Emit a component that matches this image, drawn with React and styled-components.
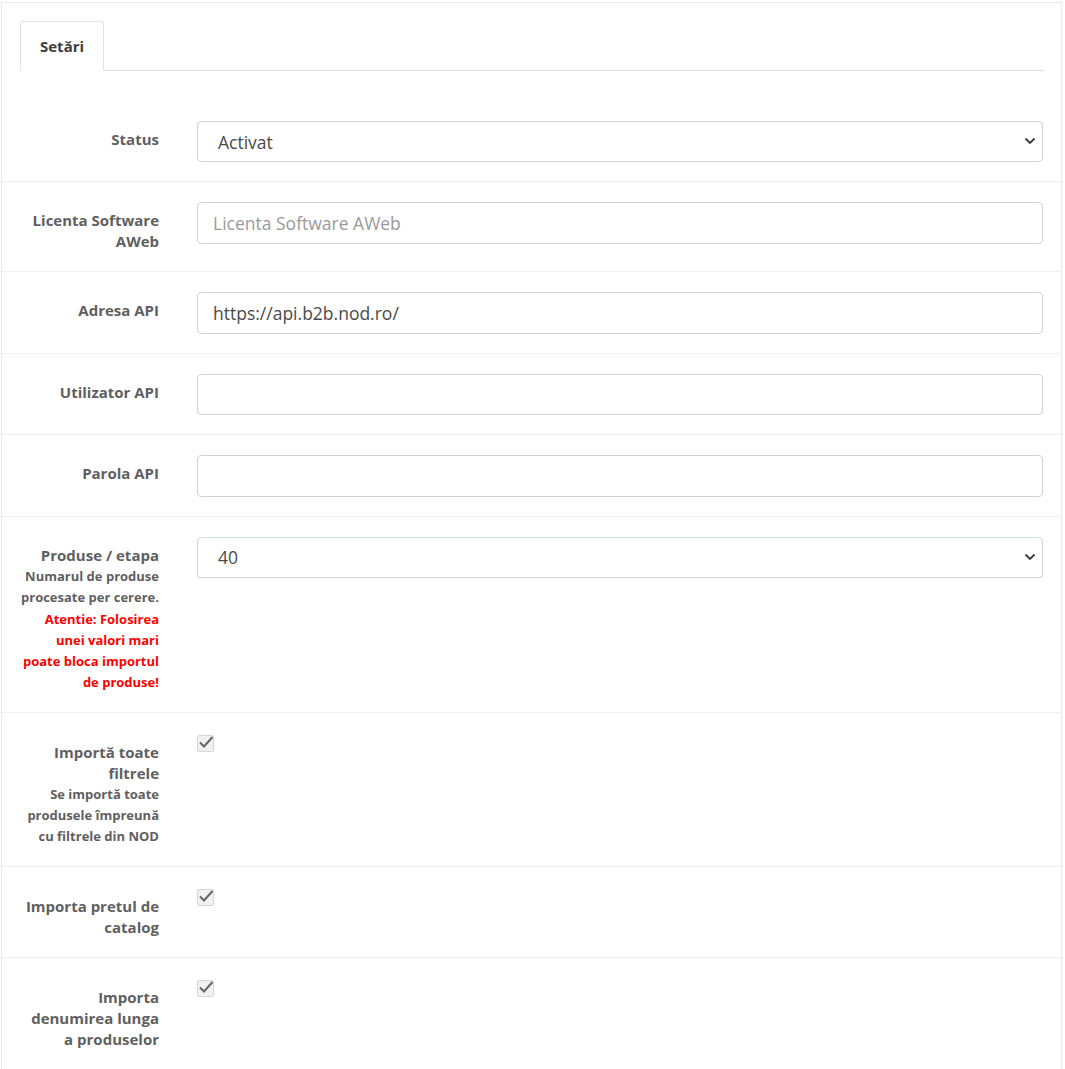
import styled, { createGlobalStyle } from 'styled-components';

const GlobalStyle = createGlobalStyle`
    html, body {
        margin: 0;
        background: #fff;
        font-family: "Open Sans", "Liberation Sans", sans-serif;
    }
`;

const Panel = styled.div`
    margin: 2px 3px 0 1px;
    border: 1px solid #e8e8e8;
    background: #fff;
`;

const TabBar = styled.div`
    display: flex;
    margin: 18px 17px 0 18px;
    border-bottom: 1px solid #dedede;
`;

const Tab = styled.div`
    padding: 14px 19px 13px 19px;
    margin-bottom: -1px;
    border: 1px solid #e2e2e2;
    border-bottom-color: #fff;
    border-radius: 3px 3px 0 0;
    background: #fff;
    font-size: 15px;
    line-height: 21px;
    font-weight: 700;
    color: #3d3d3d;
`;

const Form = styled.form`
    margin-top: 30px;
`;

const Row = styled.div`
    display: grid;
    grid-template-columns: 139px 1fr;
    column-gap: 38px;
    padding: 20px 18px 19px 18px;
    & + & {
        border-top: 1px solid #efefef;
    }
`;

const Label = styled.label`
    padding-top: ${(p) => (p.$check ? 9 : 8)}px;
    text-align: right;
    font-size: 15px;
    line-height: 21px;
    font-weight: 700;
    color: #5f5f5f;
`;

const Help = styled.span`
    display: block;
    margin-top: 0.5px;
    font-size: 13px;
    line-height: 21px;
    font-weight: 700;
    color: ${(p) => (p.$warn ? '#ff0000' : '#5f5f5f')};
`;

const Field = styled.div`
    position: relative;
    align-self: start;
`;

const controlBase = `
    box-sizing: border-box;
    width: 100%;
    border: 1px solid #d2d2d2;
    border-radius: 4px;
    background: #fff;
    font-family: "Open Sans", "Liberation Sans", sans-serif;
    font-size: 17.5px;
    color: #4a4a4a;
    outline: none;
`;

const Input = styled.input`
    ${controlBase}
    height: 41.6px;
    padding: 0 15px;
    &::placeholder {
        color: #9a9a9a;
    }
`;

const Select = styled.select`
    ${controlBase}
    height: 41px;
    appearance: none;
    padding: 0 36px 0 20px;
    ${(p) => p.$focus && 'border-top-color: #cfe3f1;'}
`;

const Chevron = styled.svg`
    position: absolute;
    right: 7px;
    top: 16px;
    pointer-events: none;
`;

const CheckBox = styled.svg`
    display: block;
    margin-top: 1px;
`;

const SelectField = ({ value, focus }) => (
    <Field>
        <Select defaultValue={value} $focus={focus}>
            <option>{value}</option>
        </Select>
        <Chevron width="12" height="8" viewBox="0 0 12 8">
            <path d="M1.5 1.5 L6 6 L10.5 1.5" fill="none" stroke="#3a3a3a" strokeWidth="1.8" />
        </Chevron>
    </Field>
);

const Checked = () => (
    <Field>
        <CheckBox width="19" height="19" viewBox="0 0 19 19">
            <rect x="0.5" y="1.5" width="16" height="16" rx="1.5" fill="#f1f1f1" stroke="#d6d6d6" />
            <path d="M3 8.5 L7 12.5 L15.5 3" fill="none" stroke="#666" strokeWidth="2" />
        </CheckBox>
    </Field>
);

export default function App() {
    return (
        <>
            <GlobalStyle />
            <Panel>
                <TabBar>
                    <Tab>Setări</Tab>
                </TabBar>
                <Form>
                    <Row>
                        <Label>Status</Label>
                        <SelectField value="Activat" />
                    </Row>
                    <Row>
                        <Label>Licenta Software AWeb</Label>
                        <Field>
                            <Input placeholder="Licenta Software AWeb" />
                        </Field>
                    </Row>
                    <Row>
                        <Label>Adresa API</Label>
                        <Field>
                            <Input defaultValue="https://api.b2b.nod.ro/" />
                        </Field>
                    </Row>
                    <Row>
                        <Label>Utilizator API</Label>
                        <Field>
                            <Input />
                        </Field>
                    </Row>
                    <Row>
                        <Label>Parola API</Label>
                        <Field>
                            <Input type="password" />
                        </Field>
                    </Row>
                    <Row>
                        <Label>
                            Produse / etapa
                            <Help>Numarul de produse procesate per cerere.</Help>
                            <Help $warn>
                                Atentie: Folosirea unei valori mari poate bloca importul de produse!
                            </Help>
                        </Label>
                        <SelectField value="40" focus />
                    </Row>
                    <Row>
                        <Label $check>
                            Importă toate filtrele
                            <Help>Se importă toate produsele împreună cu filtrele din NOD</Help>
                        </Label>
                        <Checked />
                    </Row>
                    <Row>
                        <Label $check>Importa pretul de catalog</Label>
                        <Checked />
                    </Row>
                    <Row>
                        <Label $check>Importa denumirea lunga a produselor</Label>
                        <Checked />
                    </Row>
                </Form>
            </Panel>
        </>
    );
}
